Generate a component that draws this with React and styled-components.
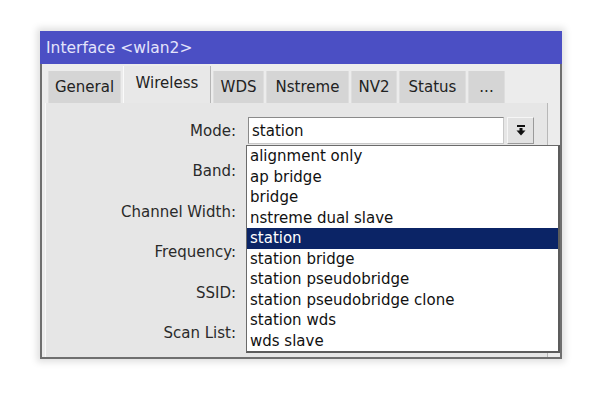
import styled, { createGlobalStyle } from "styled-components";

const GlobalStyle = createGlobalStyle`
    html, body {
        margin: 0;
        padding: 0;
        background: #fff;
    }
    body {
        font-family: "DejaVu Sans", "Liberation Sans", sans-serif;
        font-size: 15px;
    }
`

const tabs = [
    { name: "General", width: 73 },
    { name: "Wireless", width: 88, active: true },
    { name: "WDS", width: 51 },
    { name: "Nstreme", width: 83 },
    { name: "NV2", width: 46 },
    { name: "Status", width: 67 },
    { name: "...", width: 37 },
];

const fields = ["Mode:", "Band:", "Channel Width:", "Frequency:", "SSID:", "Scan List:"];

const modes = [
    "alignment only",
    "ap bridge",
    "bridge",
    "nstreme dual slave",
    "station",
    "station bridge",
    "station pseudobridge",
    "station pseudobridge clone",
    "station wds",
    "wds slave",
];

function ArrowIcon() {
    return (
        <svg width="10" height="11" viewBox="0 0 10 11">
            <rect x="1" y="0" width="8" height="2" fill="#111" />
            <rect x="3.5" y="3" width="3" height="3" fill="#111" />
            <polygon points="0.5,5.5 9.5,5.5 5,10.5" fill="#111" />
        </svg>
    );
}

export default function App() {
    return (
        <Page>
            <GlobalStyle />
            <Window>
                <TitleBar>Interface &lt;wlan2&gt;</TitleBar>
                <Body>
                    <TabRow>
                        {tabs.map((t) => (
                            <Tab key={t.name} $active={t.active} $width={t.width}>{t.name}</Tab>
                        ))}
                    </TabRow>
                    <Panel>
                        <Form>
                            {fields.map((f, i) => (
                                <Row key={f}>
                                    <Label>{f}</Label>
                                    {i === 0 ? (
                                        <Field>
                                            <Input>station</Input>
                                            <DropButton><ArrowIcon /></DropButton>
                                            <List>
                                                {modes.map((m) => (
                                                    <Item key={m} $selected={m === "station"}>{m}</Item>
                                                ))}
                                            </List>
                                        </Field>
                                    ) : <span />}
                                </Row>
                            ))}
                        </Form>
                    </Panel>
                </Body>
            </Window>
        </Page>
    );
}

const Page = styled.div`
    width: 604px;
    height: 395px;
    box-sizing: border-box;
    padding: 31px 0 0 40px;
`

const Window = styled.div`
    width: 522px;
    height: 328px;
    box-sizing: border-box;
    border: 2px solid #6f6f6f;
    border-top-color: #5a5a5a;
    box-shadow: 0 0 7px 3px rgba(0, 0, 0, 0.13);
    display: flex;
    flex-direction: column;
    background: #ececec;
`

const TitleBar = styled.div`
    height: 32px;
    flex-shrink: 0;
    background: #4b4fc4;
    color: #e4e4fb;
    font-size: 15.5px;
    display: flex;
    align-items: center;
    padding-left: 6px;
    margin: -2px -2px 0 -2px;
    padding-top: 1px;
`

const Body = styled.div`
    flex: 1;
    display: flex;
    flex-direction: column;
    padding: 0 12px 0 6px;
    min-height: 0;
`

const TabRow = styled.div`
    display: flex;
    align-items: flex-end;
    gap: 2px;
    height: 39px;
    flex-shrink: 0;
`

const Tab = styled.div`
    width: ${(p) => p.$width}px;
    height: ${(p) => (p.$active ? 37 : 32)}px;
    box-sizing: border-box;
    display: flex;
    align-items: center;
    justify-content: center;
    color: #222;
    background: ${(p) => (p.$active ? "#e8e8e8" : "#d5d5d5")};
    border-left: 1px solid ${(p) => (p.$active ? "#fafafa" : "#dedede")};
    border-right: 1px solid ${(p) => (p.$active ? "#b5b5b5" : "#dedede")};
    padding-bottom: ${(p) => (p.$active ? 3 : 0)}px;
`

const Panel = styled.div`
    flex: 1;
    margin-left: -3px;
    background: #e6e6e6;
    border-left: 1px solid #f8f8f8;
    border-right: 1px solid #b8b8b8;
    padding: 14px 13px 0 0;
`

const Form = styled.div`
    display: grid;
    grid-auto-rows: 27px;
    row-gap: 13.6px;
`

const Row = styled.div`
    display: grid;
    grid-template-columns: 190px 1fr;
    column-gap: 12px;
    align-items: center;
`

const Label = styled.div`
    text-align: right;
    color: #2a2a2a;
`

const Field = styled.div`
    position: relative;
    display: flex;
    gap: 3px;
    height: 27px;
`

const Input = styled.div`
    flex: 1;
    background: #fff;
    border: 1px solid #c8c8c8;
    border-top-color: #8a8a8a;
    border-left-color: #8a8a8a;
    display: flex;
    align-items: center;
    padding-left: 3px;
    color: #111;
`

const DropButton = styled.div`
    width: 27px;
    box-sizing: border-box;
    background: #e2e2e2;
    border: 1px solid #f6f6f6;
    border-right-color: #9a9a9a;
    border-bottom-color: #9a9a9a;
    display: flex;
    align-items: center;
    justify-content: center;
`

const List = styled.div`
    position: absolute;
    left: -2px;
    top: 28px;
    width: 314px;
    height: 208px;
    box-sizing: border-box;
    background: #fff;
    border: 1px solid #6a6a6a;
    border-right: 2px solid #5c5c5c;
    border-bottom: 2px solid #5c5c5c;
    z-index: 2;
`

const Item = styled.div`
    height: 20.5px;
    line-height: 20.5px;
    padding-left: 3px;
    white-space: nowrap;
    color: ${(p) => (p.$selected ? "#fff" : "#111")};
    background: ${(p) => (p.$selected ? "#0b2466" : "transparent")};
`
